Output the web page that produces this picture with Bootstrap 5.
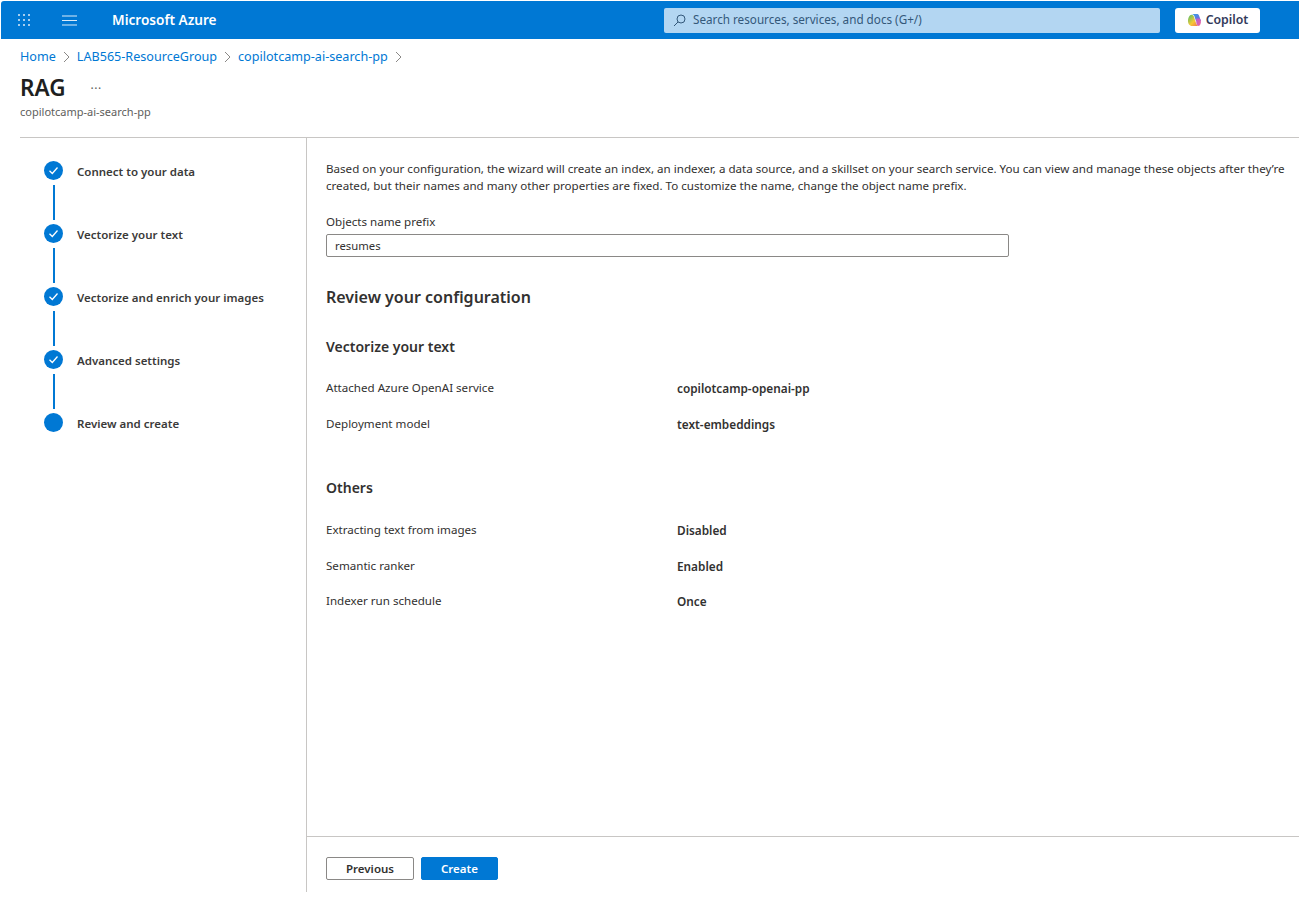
<!DOCTYPE html>
<html lang="en">
<head>
<meta charset="utf-8">
<title>RAG</title>
<link rel="stylesheet" href="https://cdn.jsdelivr.net/npm/bootstrap@5.3.0/dist/css/bootstrap.min.css">
<style>
html,body{height:100%}
body{font-family:"Noto Sans","Open Sans",sans-serif;font-size:11.6px;color:#323130;background:#fff;overflow:hidden}
.topbar{height:38px;margin:1px 0 0 1px;background:#0078d4;color:#fff;border-radius:3px 0 0 0}
.waffle{width:14px;margin-left:16px;display:block}
.burger{width:15px;margin-left:31px;display:block}
.brand{font-size:13.6px;font-weight:600;margin-left:35px;width:552px}
.searchbox{width:496px;height:25px;background:#b3d6f2;color:#33587a;font-size:11.7px;border-radius:2px;padding-left:9px;gap:7px}
.copilot{width:85px;height:25px;margin-left:15px;background:#fff;color:#323a5a;font-size:12.3px;font-weight:600;border-radius:3px;gap:4px;border:0;padding:0}
.crumbs{height:34px;padding:2px 0 0 20px;gap:7px;font-size:12.6px;color:#0078d4}
.crumbs svg{width:7px;height:12px}
.heading{padding-left:20px;height:30px}
.heading h1{font-size:22.500px;font-weight:600;margin:0;color:#201f1e;line-height:30px}
.more{margin-left:25px;font-size:12px;color:#605e5c;line-height:1;letter-spacing:.5px;position:relative;top:1px}
.subname{padding:1px 0 0 20px;font-size:11px;color:#605e5c;height:34px}
.workspace{margin-left:20px;border-top:1px solid #c8c6c4;height:755px}
.stepper{width:287px;border-right:1px solid #c8c6c4;padding:24px 0 0 24px;flex:none}
.stepitem{gap:14px;height:20px;font-weight:600;font-size:11.500px;color:#3b3a39;line-height:20px}
.dot{width:19px;height:19px;border-radius:50%;background:#0078d4;flex:none;margin-top:-3px}
.dot svg{width:11px;height:11px;display:block}
.linkline{width:2px;height:35px;background:#0078d4;margin:3px 0 5px 8.500px}
.mainpane{min-width:0}
.scrollarea{padding:22px 0 0 19px;flex:1 1 auto;min-height:0}
.intro{font-size:11.6px;line-height:17px;margin:0 0 20px}
.lbl{font-size:11.6px;line-height:16px;margin-bottom:4px;display:block}
.namefield{width:683px;height:23px;border:1px solid #8a8886;border-radius:2px;font-size:11.3px;padding:0 8px;color:#323130;box-shadow:none;min-height:0}
.h-review{font-size:16px;font-weight:600;margin:29px 0 0;line-height:22px}
.h-sect{font-size:14px;font-weight:600;line-height:20px;margin:0}
.sect1{margin-top:29px}
.sect2{margin-top:28px}
.kv{height:35.500px;font-size:11.6px;line-height:18px}
.kv:first-of-type{margin-top:22px}
.sect2 .kv:first-of-type{margin-top:23px}
.kv .k{width:351px;flex:none}
.kv .v{font-weight:600;font-size:11.8px}
.footerbar{height:56px;border-top:1px solid #c8c6c4;padding:20px 0 0 19px;gap:7px;flex:none}
.bt{height:23px;font-size:11.500px;font-weight:600;padding:1px 0 0;border-radius:2px;line-height:20px}
.bt-prev{width:88px;border:1px solid #8a8886;background:#fff;color:#323130}
.bt-create{width:77px;border:1px solid #0078d4;background:#0078d4;color:#fff}
</style>
</head>
<body>
<header class="topbar d-flex align-items-center">
  <svg class="waffle" viewBox="0 0 14 14" fill="#dcebf8" aria-hidden="true"><g><circle cx="2" cy="2" r="1"/><circle cx="7" cy="2" r="1"/><circle cx="12" cy="2" r="1"/><circle cx="2" cy="7" r="1"/><circle cx="7" cy="7" r="1"/><circle cx="12" cy="7" r="1"/><circle cx="2" cy="12" r="1"/><circle cx="7" cy="12" r="1"/><circle cx="12" cy="12" r="1"/></g></svg>
  <svg class="burger" viewBox="0 0 15 11" stroke="#dcebf8" stroke-width="1.200" aria-hidden="true"><path d="M0 1h15M0 5.500h15M0 10h15"/></svg>
  <div class="brand">Microsoft Azure</div>
  <div class="searchbox d-flex align-items-center">
    <svg width="13" height="13" viewBox="0 0 13 13" fill="none" stroke="#33587a" stroke-width="1" aria-hidden="true"><circle cx="8" cy="5" r="4"/><path d="M5 8 1 12"/></svg>
    <span>Search resources, services, and docs (G+/)</span>
  </div>
  <button class="copilot d-flex align-items-center justify-content-center" type="button">
    <svg width="15" height="15" viewBox="0 0 15 15" aria-hidden="true">
      <defs>
        <linearGradient id="cg1" x1="0" y1="0" x2="1" y2="1"><stop offset="0" stop-color="#35a5e8"/><stop offset="1" stop-color="#7a5cd6"/></linearGradient>
        <linearGradient id="cg2" x1="0" y1="0" x2="1" y2="1"><stop offset="0" stop-color="#4cbf6a"/><stop offset=".55" stop-color="#f6c935"/><stop offset="1" stop-color="#ef6f4e"/></linearGradient>
        <linearGradient id="cg3" x1="0" y1="0" x2="1" y2="1"><stop offset="0" stop-color="#b45fd6"/><stop offset="1" stop-color="#f0669a"/></linearGradient>
      </defs>
      <path d="M4.500 1H10c1 0 1.600.5 2 1.500L14 8H9L7.500 3.500C7 2 6 1.200 4.500 1Z" fill="url(#cg1)"/>
      <path d="M4.500 1.800C6 1.800 6.700 2.800 7 4l2 6c.5 1.500 1.400 3 3 3H5C2.500 13 1 10.500 1 8c0-3 1.500-6.200 3.500-6.200Z" fill="url(#cg2)"/>
      <path d="M9 5.500h3.600C14 6.500 14.300 9 13.500 11c-.6 1.600-1.600 2.200-2.500 1.800-1-.6-1.300-1.800-1.700-3Z" fill="url(#cg3)"/>
    </svg>
    <span>Copilot</span>
  </button>
</header>

<nav class="crumbs d-flex align-items-center" aria-label="breadcrumb">
  <span>Home</span>
  <svg viewBox="0 0 7 12" fill="none" stroke="#8a8886" aria-hidden="true"><path d="m1 1 5 5-5 5"/></svg>
  <span>LAB565-ResourceGroup</span>
  <svg viewBox="0 0 7 12" fill="none" stroke="#8a8886" aria-hidden="true"><path d="m1 1 5 5-5 5"/></svg>
  <span>copilotcamp-ai-search-pp</span>
  <svg viewBox="0 0 7 12" fill="none" stroke="#8a8886" aria-hidden="true"><path d="m1 1 5 5-5 5"/></svg>
</nav>

<div class="heading d-flex align-items-center">
  <h1>RAG</h1>
  <span class="more">···</span>
</div>
<div class="subname">copilotcamp-ai-search-pp</div>

<div class="workspace d-flex">
  <aside class="stepper">
    <div class="stepitem d-flex align-items-center"><span class="dot d-flex align-items-center justify-content-center"><svg viewBox="0 0 11 11" fill="none" stroke="#fff" stroke-width="1.300"><path d="m1.500 5.800 2.800 2.700 5.200-6"/></svg></span>Connect to your data</div>
    <div class="linkline"></div>
    <div class="stepitem d-flex align-items-center"><span class="dot d-flex align-items-center justify-content-center"><svg viewBox="0 0 11 11" fill="none" stroke="#fff" stroke-width="1.300"><path d="m1.500 5.800 2.800 2.700 5.200-6"/></svg></span>Vectorize your text</div>
    <div class="linkline"></div>
    <div class="stepitem d-flex align-items-center"><span class="dot d-flex align-items-center justify-content-center"><svg viewBox="0 0 11 11" fill="none" stroke="#fff" stroke-width="1.300"><path d="m1.500 5.800 2.800 2.700 5.200-6"/></svg></span>Vectorize and enrich your images</div>
    <div class="linkline"></div>
    <div class="stepitem d-flex align-items-center"><span class="dot d-flex align-items-center justify-content-center"><svg viewBox="0 0 11 11" fill="none" stroke="#fff" stroke-width="1.300"><path d="m1.500 5.800 2.800 2.700 5.200-6"/></svg></span>Advanced settings</div>
    <div class="linkline"></div>
    <div class="stepitem d-flex align-items-center"><span class="dot"></span>Review and create</div>
  </aside>
  <main class="mainpane flex-grow-1 d-flex flex-column">
    <div class="scrollarea">
      <p class="intro">Based on your configuration, the wizard will create an index, an indexer, a data source, and a skillset on your search service. You can view and manage these objects after they’re created, but their names and many other properties are fixed. To customize the name, change the object name prefix.</p>
      <label class="lbl" for="prefix">Objects name prefix</label>
      <input id="prefix" class="form-control namefield" type="text" value="resumes">
      <h2 class="h-review">Review your configuration</h2>
      <section class="sect1">
        <h3 class="h-sect">Vectorize your text</h3>
        <div class="kv d-flex"><span class="k">Attached Azure OpenAI service</span><span class="v">copilotcamp-openai-pp</span></div>
        <div class="kv d-flex"><span class="k">Deployment model</span><span class="v">text-embeddings</span></div>
      </section>
      <section class="sect2">
        <h3 class="h-sect">Others</h3>
        <div class="kv d-flex"><span class="k">Extracting text from images</span><span class="v">Disabled</span></div>
        <div class="kv d-flex"><span class="k">Semantic ranker</span><span class="v">Enabled</span></div>
        <div class="kv d-flex"><span class="k">Indexer run schedule</span><span class="v">Once</span></div>
      </section>
    </div>
    <div class="footerbar d-flex align-items-start">
      <button class="btn bt bt-prev" type="button">Previous</button>
      <button class="btn bt bt-create" type="button">Create</button>
    </div>
  </main>
</div>
<script src="https://cdn.jsdelivr.net/npm/bootstrap@5.3.0/dist/js/bootstrap.bundle.min.js"></script>
</body>
</html>
